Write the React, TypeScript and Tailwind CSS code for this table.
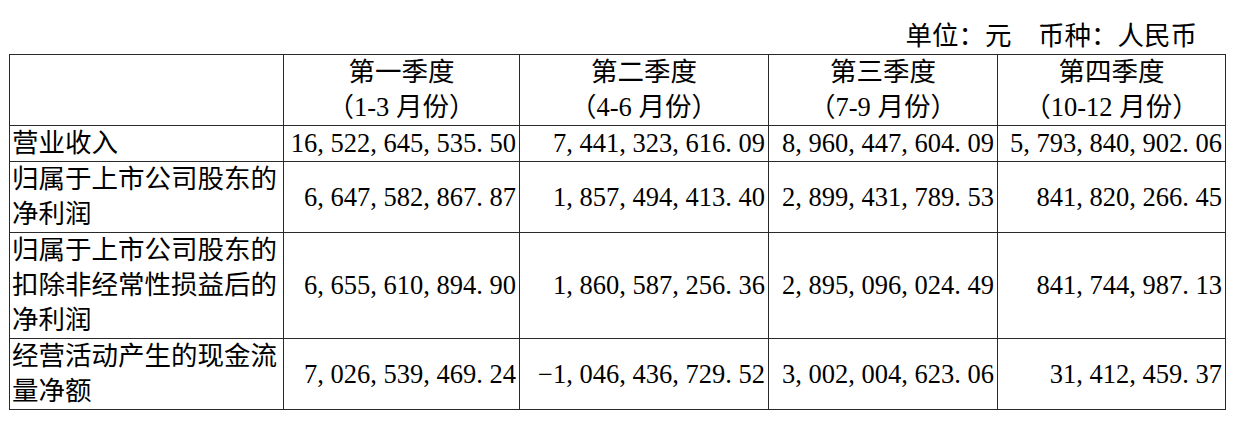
import React from 'react';

type Row = {
  label: string[];
  values: string[];
};

const rows: Row[] = [
  {
    label: ['营业收入'],
    values: ['16,522,645,535.50', '7,441,323,616.09', '8,960,447,604.09', '5,793,840,902.06'],
  },
  {
    label: ['归属于上市公司股东的', '净利润'],
    values: ['6,647,582,867.87', '1,857,494,413.40', '2,899,431,789.53', '841,820,266.45'],
  },
  {
    label: ['归属于上市公司股东的', '扣除非经常性损益后的', '净利润'],
    values: ['6,655,610,894.90', '1,860,587,256.36', '2,895,096,024.49', '841,744,987.13'],
  },
  {
    label: ['经营活动产生的现金流', '量净额'],
    values: ['7,026,539,469.24', '-1,046,436,729.52', '3,002,004,623.06', '31,412,459.37'],
  },
];

const quarters = [
  { name: '第一季度', range: '（1-3 月份）' },
  { name: '第二季度', range: '（4-6 月份）' },
  { name: '第三季度', range: '（7-9 月份）' },
  { name: '第四季度', range: '（10-12 月份）' },
];

// SimSun gives "," and "." a half-em box, so pad the serif separators out to match
const Amount = ({ value }: { value: string }) => {
  const parts = value.split(/([,.])/);
  return (
    <>
      {parts.map((p, i) =>
        p === ',' || p === '.' ? (
          <span key={i} className="mr-[0.25em]">
            {p}
          </span>
        ) : (
          <span key={i}>{p.replace('-', '−')}</span>
        )
      )}
    </>
  );
};

const App = () => {
  return (
    <div className="w-[1236px] h-[432px] bg-white text-black font-['Liberation_Serif','Noto_Sans_CJK_SC',serif] text-[26.5px] leading-[35px]">
      {/* unit line */}
      <div className="pt-[19px] pr-[39px] text-right">单位：元　币种：人民币</div>

      <table className="ml-[9px] table-fixed border-collapse">
        <colgroup>
          <col className="w-[274px]" />
          <col className="w-[236px]" />
          <col className="w-[249px]" />
          <col className="w-[229px]" />
          <col className="w-[228px]" />
        </colgroup>
        <thead>
          <tr>
            <th className="border border-[#2a2a2a] p-0 font-normal"></th>
            {quarters.map((q) => (
              <th key={q.name} className="border border-[#2a2a2a] p-0 font-normal text-center">
                <div>{q.name}</div>
                <div>{q.range}</div>
              </th>
            ))}
          </tr>
        </thead>
        <tbody>
          {rows.map((r, i) => (
            <tr key={i}>
              <td className="border border-[#2a2a2a] pl-[2px] py-0 align-top whitespace-nowrap">
                {r.label.map((l) => (
                  <div key={l}>{l}</div>
                ))}
              </td>
              {r.values.map((v, j) => (
                <td
                  key={j}
                  className="border border-[#2a2a2a] pr-[3px] py-0 text-right align-middle whitespace-nowrap"
                >
                  <Amount value={v} />
                </td>
              ))}
            </tr>
          ))}
        </tbody>
      </table>
    </div>
  );
};

export default App;
